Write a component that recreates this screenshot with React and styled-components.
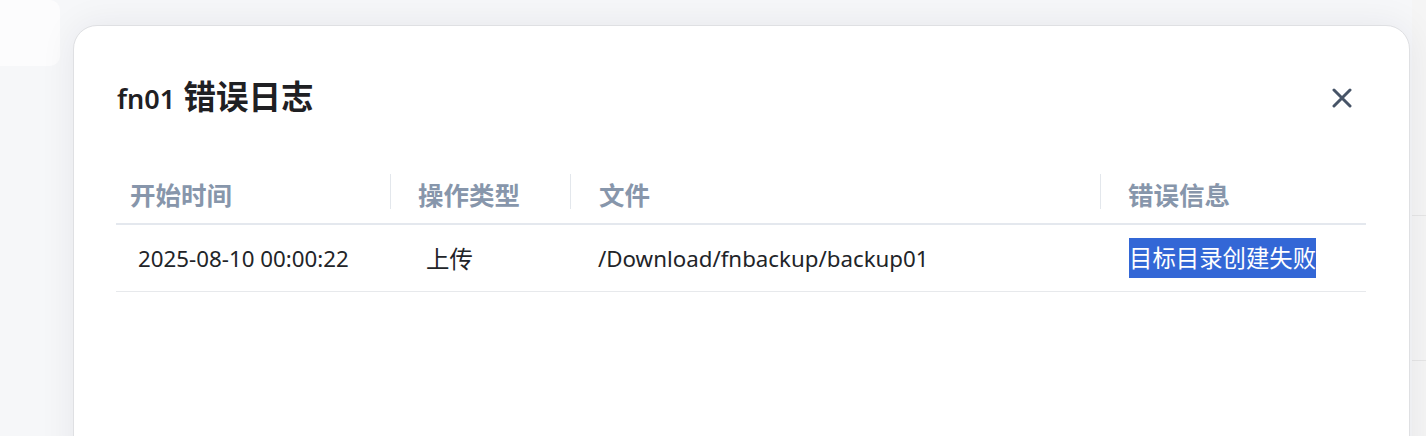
import * as React from "react"
import styled, { createGlobalStyle } from "styled-components"

const GlobalStyle = createGlobalStyle`
  body {
    margin: 0;
    background: #f5f6f8;
    font-family: "Noto Sans", "Noto Sans CJK SC", sans-serif;
    overflow: hidden;
  }
`

const columns = [
  { title: "开始时间", width: 274, headPad: 14, bodyPad: 22 },
  { title: "操作类型", width: 180, headPad: 28, bodyPad: 36 },
  { title: "文件", width: 530, headPad: 29, bodyPad: 28 },
  { title: "错误信息", width: 266, headPad: 28, bodyPad: 29 },
]

const rows = [
  {
    time: "2025-08-10 00:00:22",
    action: "上传",
    file: "/Download/fnbackup/backup01",
    error: "目标目录创建失败",
  },
]

const App = () => {
  return (
    <Screen>
      <GlobalStyle />
      <Underlay>
        <SideCard />
        <RightPanel>
          <PanelRow $height={216} />
          <PanelRow $height={145} />
        </RightPanel>
      </Underlay>

      <Modal>
        <ModalHeader>
          <Title>
            <TitleName>fn01</TitleName> 错误日志
          </Title>
          <CloseButton aria-label="关闭">
            <svg width="20" height="20" viewBox="0 0 20 20" fill="none">
              <path
                d="M2 2L18 18M18 2L2 18"
                stroke="#475467"
                strokeWidth="3"
                strokeLinecap="round"
              />
            </svg>
          </CloseButton>
        </ModalHeader>

        <Table>
          <HeadRow>
            {columns.map((col, i) => (
              <HeadCell key={col.title} $pad={col.headPad} $divider={i > 0}>
                {col.title}
              </HeadCell>
            ))}
          </HeadRow>
          {rows.map((row) => (
            <BodyRow key={row.time}>
              <BodyCell $pad={columns[0].bodyPad} $size={22.3}>{row.time}</BodyCell>
              <BodyCell $pad={columns[1].bodyPad} $size={23.4}>{row.action}</BodyCell>
              <BodyCell $pad={columns[2].bodyPad} $size={22.3}>{row.file}</BodyCell>
              <BodyCell $pad={columns[3].bodyPad} $size={23.4}>
                <Selected>{row.error}</Selected>
              </BodyCell>
            </BodyRow>
          ))}
        </Table>
      </Modal>
    </Screen>
  )
}

export default App

const Screen = styled.div`
  position: relative;
  width: 1426px;
  height: 436px;
  overflow: hidden;
  background: #f6f7f9;
`

const Underlay = styled.div`
  display: flex;
  justify-content: space-between;
  height: 100%;
`

const SideCard = styled.div`
  width: 60px;
  height: 66px;
  background: #fcfcfd;
  border-radius: 0 10px 10px 0;
`

const RightPanel = styled.div`
  width: 14px;
  background: #f5f5f5;
`

const PanelRow = styled.div`
  height: ${(p) => p.$height}px;
  border-bottom: 1px solid #e6e6e6;
  box-sizing: border-box;
`

const Modal = styled.div`
  position: absolute;
  top: 25px;
  left: 73px;
  width: 1337px;
  height: 460px;
  box-sizing: border-box;
  padding: 50px 44px 0 42px;
  background: #ffffff;
  border: 1px solid #dfe0e3;
  border-radius: 24px;
  box-shadow: 0 0 36px rgba(20, 30, 50, 0.07);
`

const ModalHeader = styled.div`
  display: flex;
  align-items: center;
  justify-content: space-between;
  height: 44px;
`

const Title = styled.h2`
  margin: 0;
  padding-left: 1px;
  font-size: 32.5px;
  font-weight: 700;
  line-height: 44px;
  color: #1f2023;
`

const TitleName = styled.span`
  font-size: 27px;
  font-weight: 600;
`

const CloseButton = styled.button`
  display: flex;
  align-items: center;
  justify-content: center;
  margin-right: 13px;
  padding: 0;
  border: none;
  background: none;
  cursor: pointer;
`

const Table = styled.div`
  margin-top: 44px;
  display: grid;
  grid-template-columns: ${columns.map((c) => `${c.width}px`).join(" ")};
`

const HeadRow = styled.div`
  display: contents;
`

const HeadCell = styled.div`
  position: relative;
  display: flex;
  align-items: center;
  height: 59px;
  padding-left: ${(p) => p.$pad}px;
  border-bottom: 2px solid #e4e8ee;
  font-size: 25.5px;
  font-weight: 700;
  color: #8796ab;

  &::before {
    content: "";
    display: ${(p) => (p.$divider ? "block" : "none")};
    position: absolute;
    left: 0;
    top: 10px;
    width: 1px;
    height: 35px;
    background: #e3e7ec;
  }
`

const BodyRow = styled.div`
  display: contents;
`

const BodyCell = styled.div`
  display: flex;
  align-items: center;
  height: 66px;
  padding-left: ${(p) => p.$pad}px;
  border-bottom: 1px solid #e7e9ec;
  font-size: ${(p) => p.$size}px;
  color: #222428;
  white-space: nowrap;
`

const Selected = styled.span`
  display: inline-block;
  line-height: 40px;
  background: #3367d6;
  color: #ffffff;
`
